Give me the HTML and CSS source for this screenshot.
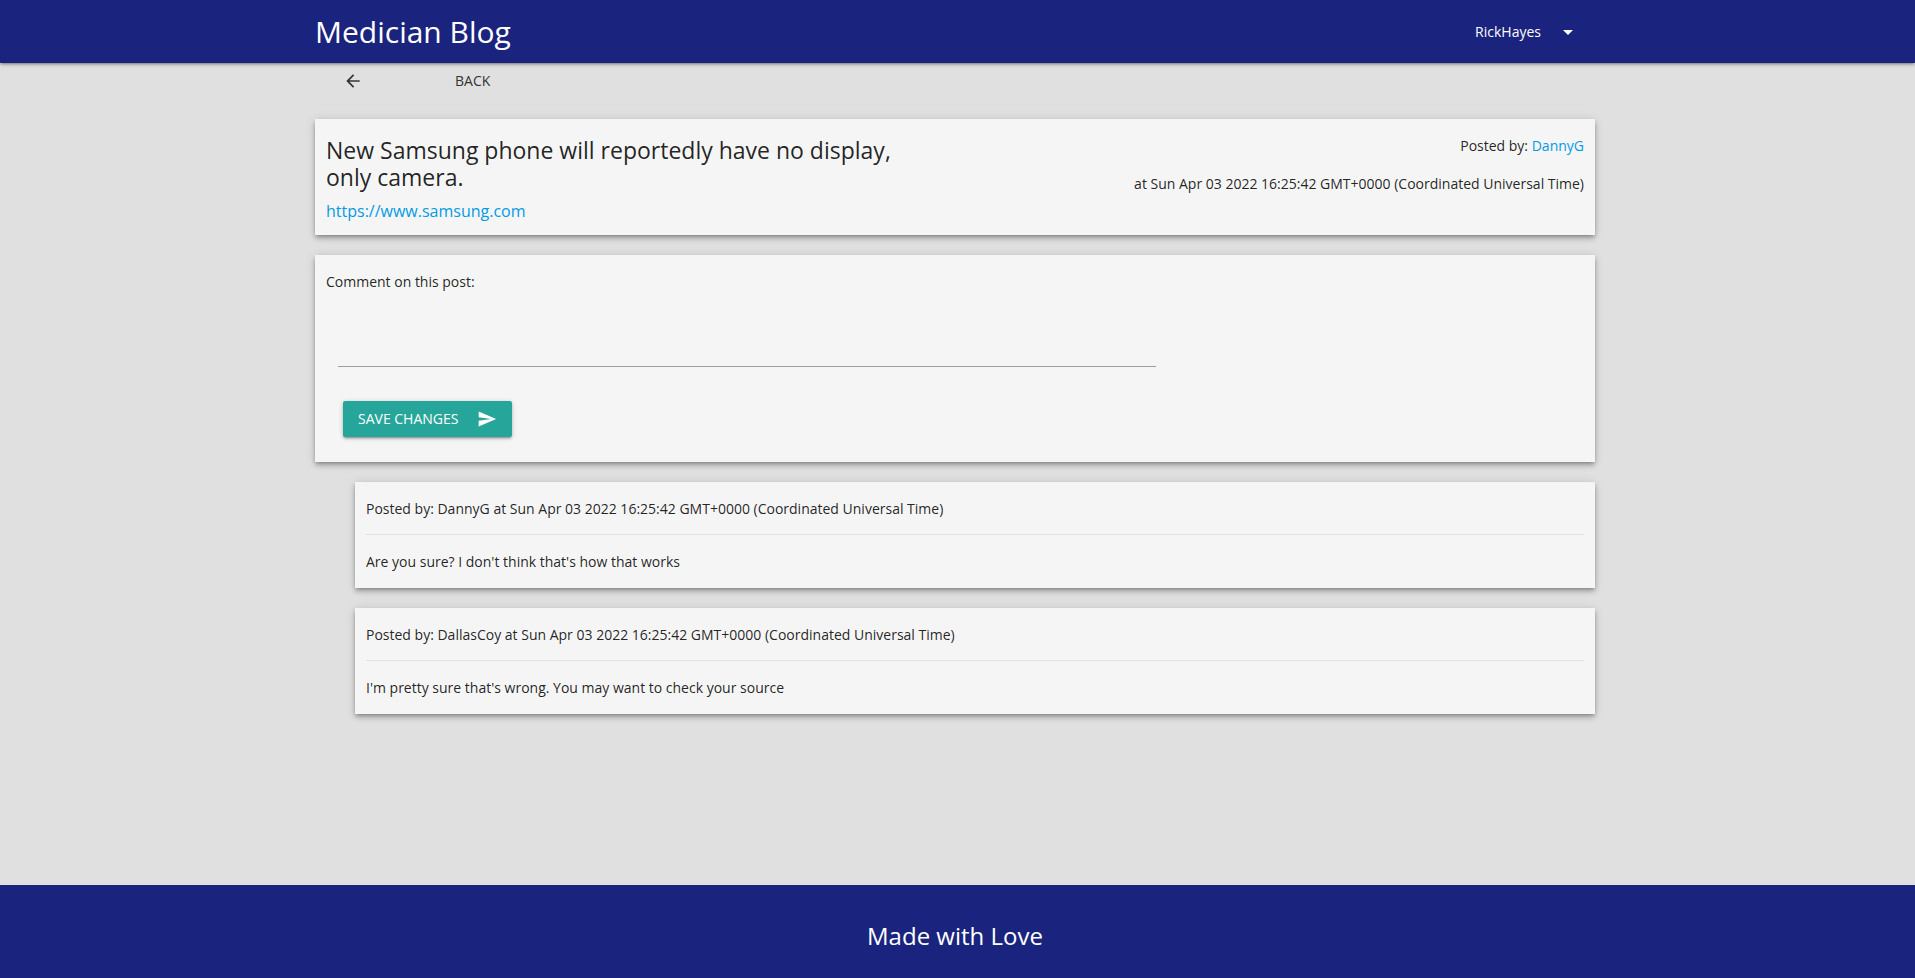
FILE: index.html
```html
<!DOCTYPE html>
<html lang="en">
<head>
<meta charset="utf-8">
<title>Medician Blog</title>
<link rel="stylesheet" href="styles.css">
</head>
<body>
<header class="navbar gutter">
  <nav class="container navbar-inner">
    <a class="brand" href="#">Medician Blog</a>
    <button class="user-menu" type="button">RickHayes
      <svg class="caret" viewBox="0 0 24 24" aria-hidden="true"><path d="M7 10l5 5 5-5z"/></svg>
    </button>
  </nav>
</header>
<main class="page gutter">
  <div class="container">
    <a class="back" href="#">
      <svg class="back-icon" viewBox="0 0 24 24" aria-hidden="true"><path d="M20 11H7.83l5.59-5.59L12 4l-8 8 8 8 1.41-1.41L7.83 13H20v-2z"/></svg>
      <span>BACK</span>
    </a>
    <article class="card post">
      <div class="post-main">
        <h1 class="post-title">New Samsung phone will reportedly have no display, only camera.</h1>
        <a class="post-link" href="#">https://www.samsung.com</a>
      </div>
      <div class="post-meta">
        <p>Posted by: <a href="#">DannyG</a></p>
        <p>at Sun Apr 03 2022 16:25:42 GMT+0000 (Coordinated Universal Time)</p>
      </div>
    </article>
    <form class="card comment-form">
      <label for="comment">Comment on this post:</label>
      <textarea class="comment-input" id="comment"></textarea>
      <button class="save" type="button">SAVE CHANGES
        <svg class="send-icon" viewBox="0 0 24 24" aria-hidden="true"><path d="M2.01 21L23 12 2.01 3 2 10l15 2-15 2z"/></svg>
      </button>
    </form>
    <article class="card comment">
      <p class="comment-meta">Posted by: DannyG at Sun Apr 03 2022 16:25:42 GMT+0000 (Coordinated Universal Time)</p>
      <p class="comment-text">Are you sure? I don't think that's how that works</p>
    </article>
    <article class="card comment">
      <p class="comment-meta">Posted by: DallasCoy at Sun Apr 03 2022 16:25:42 GMT+0000 (Coordinated Universal Time)</p>
      <p class="comment-text">I'm pretty sure that's wrong. You may want to check your source</p>
    </article>
  </div>
</main>
<footer class="footer gutter">Made with Love</footer>
</body>
</html>
```
FILE: styles.css
```css
* { box-sizing: border-box; }

body {
  margin: 0;
  min-height: 100vh;
  display: flex;
  flex-direction: column;
  background: #e0e0e0;
  color: rgba(0, 0, 0, 0.87);
  font: 14px/22px "Segoe UI", "Open Sans", "Noto Sans", sans-serif;
}

p, h1 { margin: 0; font-weight: 400; }
a { color: #039be5; text-decoration: none; }
button { border: 0; font: inherit; cursor: pointer; }

.container {
  width: 100%;
  max-width: 1280px;
  margin: 0 auto;
}

.navbar {
  background: #1a237e;
  box-shadow: 0 2px 2px rgba(0, 0, 0, 0.14), 0 3px 1px -2px rgba(0, 0, 0, 0.12), 0 1px 5px rgba(0, 0, 0, 0.2);
}

.navbar-inner {
  display: flex;
  align-items: center;
  justify-content: space-between;
  height: 63px;
}

.brand { color: #fff; font-size: 30px; line-height: 64px; }

.user-menu {
  display: flex;
  align-items: center;
  gap: 15px;
  padding: 0 15px;
  background: none;
  color: #fff;
}

.caret { width: 24px; height: 24px; fill: #fff; }

.page { flex: 1; }

.back {
  display: inline-flex;
  align-items: center;
  gap: 92px;
  height: 36px;
  margin: 0 0 20px 28px;
  color: #343434;
}

.back-icon { width: 20px; height: 20px; fill: #343434; }

.card {
  margin-bottom: 20px;
  padding: 16px 11px;
  background: #f5f5f5;
  box-shadow: 0 4px 5px rgba(0, 0, 0, 0.14), 0 1px 10px rgba(0, 0, 0, 0.12), 0 2px 4px -1px rgba(0, 0, 0, 0.3);
}

.post {
  display: flex;
  justify-content: space-between;
  padding-bottom: 10px;
}

.post-main { width: 48%; padding-top: 2px; }
.post-title { font-size: 23px; line-height: 27px; }
.post-link { display: block; margin-top: 6px; font-size: 16px; line-height: 28px; }

.post-meta {
  display: flex;
  flex-direction: column;
  gap: 16px;
  text-align: right;
}

.comment-form { padding-bottom: 25px; }
.comment-form label { display: block; }

.comment-input {
  display: block;
  width: 65%;
  height: 64px;
  margin: 10px 0 34px 12px;
  padding: 16px 0;
  border: 0;
  border-bottom: 1px solid #9e9e9e;
  background: none;
  font: inherit;
  outline: 0;
  resize: none;
}

.save {
  display: flex;
  align-items: center;
  gap: 19px;
  height: 36px;
  margin-left: 17px;
  padding: 0 15px;
  border-radius: 2px;
  background: #26a69a;
  color: #fff;
  box-shadow: 0 2px 2px rgba(0, 0, 0, 0.14), 0 3px 1px -2px rgba(0, 0, 0, 0.12), 0 1px 5px rgba(0, 0, 0, 0.2);
}

.send-icon { width: 20px; height: 20px; fill: #fff; }

.comment { margin-left: 40px; padding-bottom: 15px; }
.comment-meta { padding-bottom: 14px; border-bottom: 1px solid #e0e0e0; }
.comment-text { padding-top: 16px; }

.footer {
  padding: 36px 0 28px;
  background: #1a237e;
  color: #fff;
  font-size: 24px;
  line-height: 29px;
  text-align: center;
}

.gutter { padding-right: 5px; }
```
